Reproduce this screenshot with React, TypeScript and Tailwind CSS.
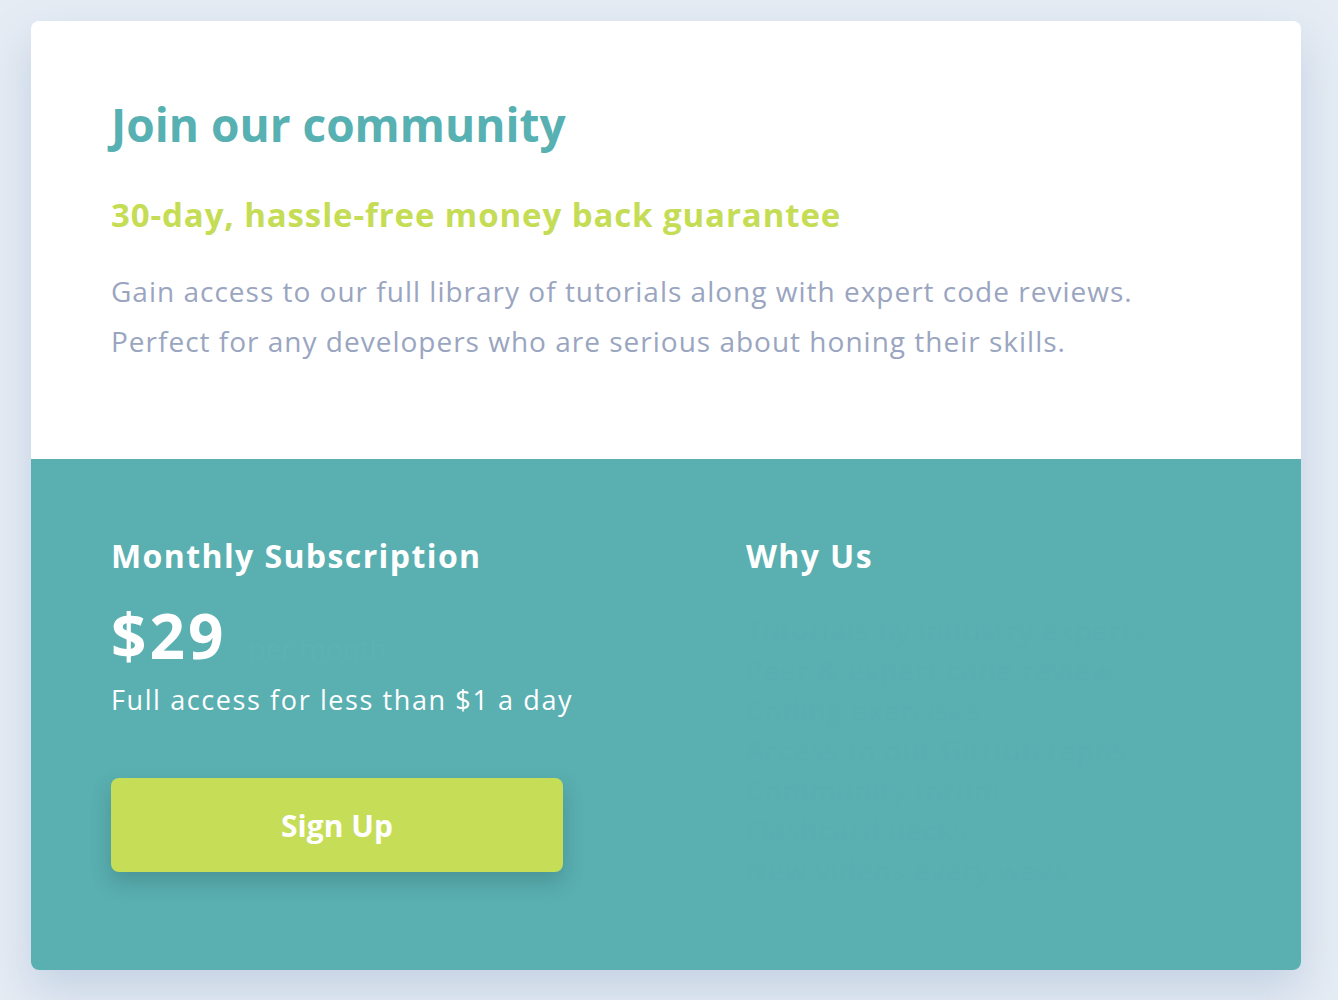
import React from 'react';

const perks = [
  'Tutorials by industry experts',
  'Peer & expert code review',
  'Coding exercises',
  'Access to our GitHub repos',
  'Community forum',
  'Flashcard decks',
  'New videos every week',
];

const App: React.FC = () => {
  return (
    <div className="min-h-screen bg-[#e5ecf4] pt-[21px] pb-[30px] font-['Open_Sans',sans-serif]">
      <div className="ml-[31px] w-[1270px] rounded-lg overflow-hidden bg-white shadow-[0_20px_45px_rgba(100,130,180,0.25)]">
        {/* intro */}
        <div className="pl-[80px] pr-[80px] pt-[75px] pb-[93px]">
          <h1 className="text-[46px] leading-[56px] font-bold text-[#57b0b1]">Join our community</h1>
          <h2 className="mt-[43px] text-[33px] leading-[40px] font-bold tracking-[0.9px] text-[#c5dc55]">
            30-day, hassle-free money back guarantee
          </h2>
          <p className="mt-[31px] text-[28px] leading-[50px] tracking-[1px] text-[#9aa5bf]">
            Gain access to our full library of tutorials along with expert code reviews.
            <br />
            Perfect for any developers who are serious about honing their skills.
          </p>
        </div>

        {/* pricing */}
        <div className="grid grid-cols-2 bg-[#5aafb1] text-white">
          <div className="px-[80px] pt-[77px] pb-[98px]">
            <h3 className="text-[32px] leading-[40px] font-bold tracking-[1.4px]">Monthly Subscription</h3>
            <div className="mt-[27px] flex h-[64px] items-baseline gap-[22px]">
              <span className="text-[62px] leading-[64px] font-bold tracking-[3px]">$29</span>
              <span className="text-[28px] leading-none text-[#5cb2b3]">per month</span>
            </div>
            <p className="mt-[15px] text-[27px] leading-[36px] tracking-[1.6px]">Full access for less than $1 a day</p>
            <button className="mt-[60px] h-[94px] w-[452px] rounded-lg bg-[#c6dd58] text-[30px] font-bold text-white shadow-[0_10px_20px_rgba(40,90,90,0.3)]">
              Sign Up
            </button>
          </div>
          <div className="px-[80px] pt-[77px] pb-[80px]">
            <h3 className="text-[32px] leading-[40px] font-bold tracking-[1.4px]">Why Us</h3>
            <ul className="mt-[34px]">
              {perks.map((perk) => (
                <li key={perk} className="text-[28px] leading-[40px] tracking-[1px] text-[#58aeb0]">
                  {perk}
                </li>
              ))}
            </ul>
          </div>
        </div>
      </div>
    </div>
  );
};

export default App;
